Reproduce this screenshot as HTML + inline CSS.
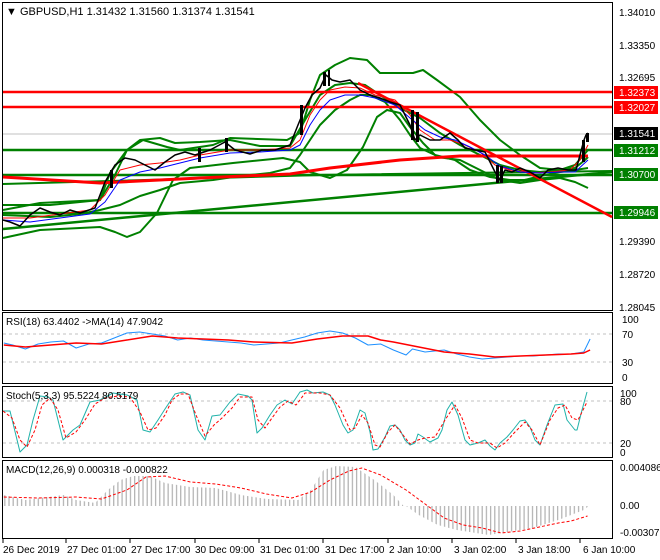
<!DOCTYPE html>
<html><head><meta charset="utf-8"><style>
html,body{margin:0;padding:0;background:#fff;}
svg{display:block;font-family:"Liberation Sans",sans-serif;}
</style></head><body>
<svg width="660" height="560" viewBox="0 0 660 560" xmlns="http://www.w3.org/2000/svg">
<defs>
<pattern id="hist" width="3.3" height="10" patternUnits="userSpaceOnUse"><rect x="0" y="0" width="1" height="10" fill="#b4b4b4"/></pattern>
</defs>
<rect width="660" height="560" fill="#fff"/>
<g fill="none" stroke="#000" stroke-width="1">
<rect x="2.5" y="2.5" width="610" height="308"/>
<rect x="2.5" y="312.5" width="610" height="71"/>
<rect x="2.5" y="386.5" width="610" height="71"/>
<rect x="2.5" y="460.5" width="610" height="78"/>
</g>
<line x1="3" y1="134" x2="612" y2="134" stroke="#c0c0c0"/>
<g fill="none" stroke-linejoin="round">
<polyline stroke="#008000" stroke-width="2" points="3,205 50,205 100,200 115,175 127,150 143,140 167,147 180,150 213,145 230,138 287,140 300,133 310,100 320,75 335,65 350,58 367,60 380,73 413,73 423,70 437,80 460,97 480,120 500,140 520,155 540,168 560,170 575,165 588,150"/>
<polyline stroke="#008000" stroke-width="2" points="3,238 40,230 100,227 115,232 127,237 140,232 157,213 173,180 190,168 233,163 283,158 300,162 310,172 330,178 347,170 363,147 377,117 387,110 400,113 410,127 423,143 437,157 460,160 480,170 500,180 520,183 540,180 560,178 575,182 588,188"/>
<polyline stroke="#008000" stroke-width="2" points="3,210 40,203 60,202 100,200 110,173 127,150 140,140 160,138 175,143 200,142 230,140 260,146 290,146 305,120 320,95 335,85 350,83 365,85 380,95 400,108 420,118 440,133 460,145 480,155 500,165 520,170 540,172 560,170 575,168 585,160 588,157"/>
<polyline stroke="#008000" stroke-width="2" points="3,215 50,217 80,214 100,210 120,205 140,196 160,190 180,183 213,180 240,176 270,173 290,168 300,155 310,140 320,125 335,110 350,100 360,95 370,95 385,102 400,120 410,135 420,148 435,155 455,160 470,170 490,177 510,180 525,180 540,176 560,172 575,170 588,168"/>
<polyline stroke="#008000" stroke-width="2" points="3,184 320,175 612,171"/>
<line x1="3" y1="150" x2="612" y2="150" stroke="#008000" stroke-width="2.5"/>
<line x1="3" y1="175" x2="612" y2="175" stroke="#008000" stroke-width="2.5"/>
<line x1="3" y1="213" x2="612" y2="213" stroke="#008000" stroke-width="2.5"/>
<line x1="3" y1="92" x2="612" y2="92" stroke="#ff0000" stroke-width="2.5"/>
<line x1="3" y1="107" x2="612" y2="107" stroke="#ff0000" stroke-width="2.5"/>
<line x1="3" y1="229" x2="612" y2="172" stroke="#008000" stroke-width="2.5"/>
<polyline stroke="#ff0000" stroke-width="3" points="3,177 100,183 200,178 290,174 330,168 400,160 460,156 588,156"/>
<line x1="358" y1="83" x2="612" y2="217" stroke="#ff0000" stroke-width="2.5"/>
<polyline stroke="#ff0000" stroke-width="1" points="3,218 30,218 60,214 90,210 105,195 120,170 140,165 160,163 180,160 200,155 230,150 260,150 290,148 300,140 310,115 320,100 330,90 345,87 360,88 375,95 395,100 410,115 420,130 435,140 450,140 465,145 480,152 495,165 510,170 530,173 550,172 570,170 580,160 588,145"/>
<polyline stroke="#0000ff" stroke-width="1" points="3,220 30,222 60,218 90,214 105,202 120,180 140,172 160,168 180,163 200,158 230,153 260,152 290,150 300,145 310,125 320,110 330,100 345,95 360,95 375,98 395,105 410,118 425,130 440,137 455,140 470,147 485,155 500,166 520,172 540,173 560,172 575,172 588,160"/>
<polyline stroke="#000" stroke-width="1.5" points="3,220 10,222 20,226 30,215 40,208 50,212 60,215 70,210 80,213 95,208 105,182 115,165 125,158 135,160 145,165 155,170 165,162 175,155 185,152 195,155 210,150 225,142 235,150 250,154 262,150 275,150 290,145 298,125 305,108 312,95 320,88 326,75 332,80 340,82 350,80 360,90 370,95 380,98 390,102 400,105 405,115 410,125 415,140 420,135 430,140 440,140 450,133 458,140 465,148 475,150 485,152 495,172 500,180 505,170 512,172 520,168 530,172 540,178 548,170 558,168 568,170 576,170 580,155 584,140 586,135 588,133"/>
</g>
<g fill="#000">
<rect x="323" y="72" width="3" height="14"/><rect x="328" y="70" width="2" height="16"/><rect x="411" y="110" width="3" height="30"/><rect x="416" y="112" width="3" height="30"/><rect x="496" y="165" width="3" height="18"/><rect x="500" y="166" width="3" height="17"/><rect x="582" y="140" width="3" height="22"/><rect x="586" y="133" width="3" height="9"/><rect x="300" y="105" width="3" height="30"/><rect x="110" y="170" width="3" height="18"/><rect x="198" y="148" width="3" height="14"/><rect x="225" y="138" width="3" height="14"/>
</g>
<text x="6" y="15" font-size="11" fill="#000">&#9660; GBPUSD,H1  1.31432 1.31560 1.31374 1.31541</text>
<g font-size="10" fill="#000">
<text x="619" y="16">1.34010</text>
<text x="619" y="49">1.33350</text>
<text x="619" y="81">1.32695</text>
<text x="619" y="213">1.30040</text>
<text x="619" y="245">1.29390</text>
<text x="619" y="278">1.28720</text>
<text x="619" y="311">1.28045</text>
</g>
<g font-size="10">
<rect x="614" y="86" width="44" height="13" fill="#ff0000"/><text x="619" y="96" fill="#fff">1.32373</text>
<rect x="614" y="101" width="44" height="13" fill="#ff0000"/><text x="619" y="111" fill="#fff">1.32027</text>
<rect x="614" y="127" width="44" height="13" fill="#000"/><text x="619" y="137" fill="#fff">1.31541</text>
<rect x="614" y="144" width="44" height="13" fill="#008000"/><text x="619" y="154" fill="#fff">1.31212</text>
<rect x="614" y="168" width="44" height="13" fill="#008000"/><text x="619" y="178" fill="#fff">1.30700</text>
<rect x="614" y="206" width="44" height="13" fill="#008000"/><text x="619" y="216" fill="#fff">1.29946</text>
</g>
<g stroke="#c0c0c0" stroke-dasharray="3,3"><line x1="3" y1="334" x2="612" y2="334"/><line x1="3" y1="362" x2="612" y2="362"/>
<line x1="3" y1="401" x2="612" y2="401"/><line x1="3" y1="443" x2="612" y2="443"/></g>
<g transform="scale(1.269,1)" fill="none" stroke-linejoin="round">
<polyline vector-effect="non-scaling-stroke" stroke="#1e90ff" stroke-width="1" points="3,343 10,345 20,349 30,344 40,342 50,341 60,348 70,344 80,343 90,338 100,333 110,332 120,334 130,336 140,340 150,338 160,340 170,341 180,342 190,343 200,345 210,344 220,343 230,340 240,337 250,333 260,331 270,333 280,338 290,345 300,344 310,350 320,355 325,349 335,352 350,350 360,354 370,357 380,359 390,358 400,357 410,356 420,356 430,355 440,354 450,354 460,352 465,339"/>
<polyline vector-effect="non-scaling-stroke" stroke="#ff0000" stroke-width="1.5" points="3,345 20,347 40,345 60,343 80,344 100,340 120,336 140,338 160,339 180,340 200,342 230,343 250,339 270,336 290,336 300,340 310,342 330,347 350,352 370,354 390,357 410,356 430,355 450,354 460,353 465,350"/>
</g>
<!-- Stoch -->
<g fill="none" stroke-linejoin="round">
<polyline stroke="#20b2aa" stroke-width="1" points="3,411 10,411 20,452 27,445 33,420 40,396 48,397 53,400 63,440 73,430 80,425 90,402 100,400 113,393 127,395 137,400 143,430 150,432 158,420 165,409 175,394 183,392 190,395 198,430 205,440 212,416 220,415 230,402 238,394 248,396 252,400 257,433 262,428 270,415 277,405 285,400 292,404 300,392 307,390 313,393 323,392 330,395 335,405 343,425 348,433 353,430 360,410 365,413 370,432 373,450 378,449 385,437 390,426 395,425 400,430 405,440 410,445 415,443 418,434 423,437 427,440 430,442 438,438 442,430 447,410 452,402 458,415 465,440 470,445 478,443 485,440 490,446 495,450 500,443 507,437 513,430 520,421 525,420 530,427 535,440 540,445 547,425 555,405 563,404 567,420 575,430 577,430 582,410 587,392"/>
<polyline stroke="#ff0000" stroke-width="1" stroke-dasharray="3,2" points="3,411 12,418 20,440 27,447 35,430 42,405 50,398 58,410 66,438 76,432 85,420 95,404 105,398 118,396 130,397 140,412 148,430 156,428 165,415 172,400 180,394 188,394 196,415 205,436 214,425 222,418 232,408 240,397 252,397 258,420 265,428 272,418 280,407 288,401 296,405 300,400 305,393 320,393 330,395 340,408 350,430 355,428 362,415 368,423 375,445 380,447 388,432 395,425 403,435 410,444 418,440 425,438 435,437 445,420 455,405 462,418 470,440 478,443 490,443 497,448 505,443 515,432 525,422 532,430 540,445 550,420 558,408 565,405 572,418 578,420 583,410 587,402"/>
</g>
<g transform="scale(1.269,1)">
<polygon fill="url(#hist)" points="3,506 3,495 20,500 50,495 60,500 75,503 85,490 95,480 105,476 118,476 130,483 150,487 170,488 190,495 210,499 235,500 245,490 255,470 265,466 280,467 295,480 310,495 318,506"/>
<polygon fill="url(#hist)" points="320,506 330,515 345,525 360,530 385,535 400,532 420,528 440,520 460,510 465,505 465,506"/>
<polyline vector-effect="non-scaling-stroke" fill="none" stroke="#ff0000" stroke-width="1" stroke-dasharray="3,2" points="3,497 30,498 60,497 80,499 100,490 115,477 130,476 150,482 170,484 190,488 210,494 230,498 245,492 260,480 275,471 285,468 300,475 320,490 335,504 350,518 365,525 380,528 395,533 410,531 425,527 440,523 450,521 463,516"/>
</g>
<g font-size="10" fill="#000">
<text x="6" y="325">RSI(18) 63.4402  -&gt;MA(14) 47.9042</text>
<text x="6" y="399">Stoch(5,3,3) 95.5224 80.5179</text>
<text x="6" y="473">MACD(12,26,9) 0.000318 -0.000822</text>
<text x="622" y="323">100</text><text x="622" y="338">70</text><text x="622" y="366">30</text><text x="622" y="381">0</text>
<text x="620" y="397">100</text><text x="620" y="405">80</text><text x="620" y="447">20</text><text x="620" y="456">0</text>
<text x="620" y="471">0.004086</text><text x="620" y="509">0.00</text><text x="620" y="536">-0.003079</text>
</g>
<g stroke="#000"><line x1="3" y1="539" x2="3" y2="543"/><line x1="66" y1="539" x2="66" y2="543"/><line x1="130" y1="539" x2="130" y2="543"/><line x1="195" y1="539" x2="195" y2="543"/><line x1="259" y1="539" x2="259" y2="543"/><line x1="323" y1="539" x2="323" y2="543"/><line x1="388" y1="539" x2="388" y2="543"/><line x1="452" y1="539" x2="452" y2="543"/><line x1="516" y1="539" x2="516" y2="543"/><line x1="580" y1="539" x2="580" y2="543"/></g>
<g font-size="10" fill="#000">
<text x="3" y="553">26 Dec 2019</text><text x="67" y="553">27 Dec 01:00</text><text x="131" y="553">27 Dec 17:00</text><text x="195" y="553">30 Dec 09:00</text><text x="260" y="553">31 Dec 01:00</text><text x="325" y="553">31 Dec 17:00</text><text x="389" y="553">2 Jan 10:00</text><text x="454" y="553">3 Jan 02:00</text><text x="518" y="553">3 Jan 18:00</text><text x="583" y="553">6 Jan 10:00</text>
</g>
</svg>
</body></html>
